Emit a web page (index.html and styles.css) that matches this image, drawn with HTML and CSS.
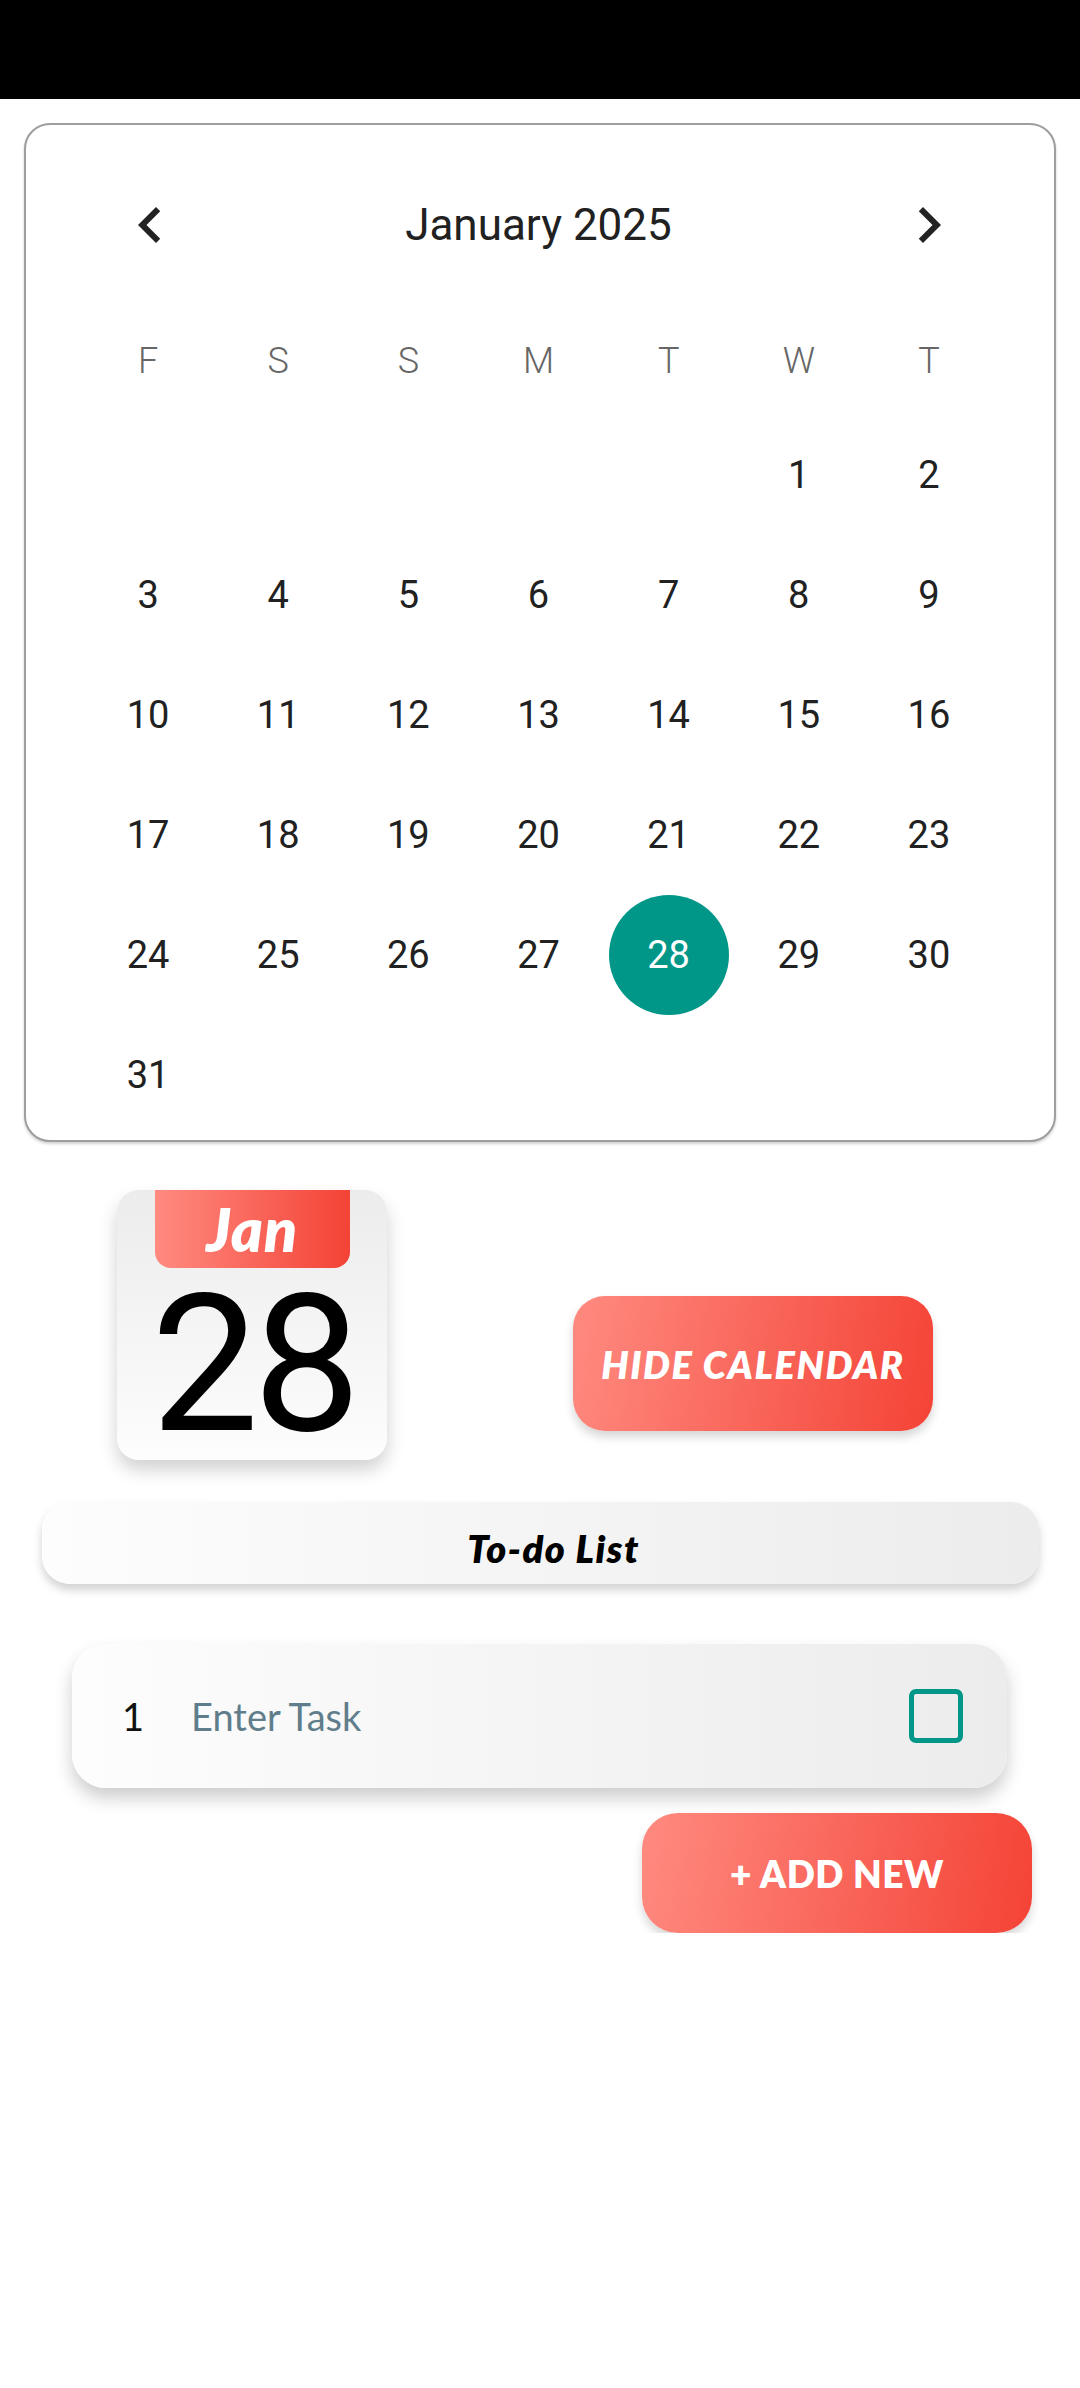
FILE: index.html
```html
<!DOCTYPE html>
<html lang="en">
<head>
<meta charset="utf-8">
<title>Calendar To-do</title>
<link rel="stylesheet" href="styles.css">
</head>
<body>
<div class="statusbar"></div>
<main class="page">
  <section class="calendar">
    <div class="cal-head">
      <span class="nav prev"><svg viewBox="0 0 24 24"><path d="M15.41 7.41L14 6l-6 6 6 6 1.41-1.41L10.83 12z"/></svg></span>
      <div class="month">January 2025</div>
      <span class="nav next"><svg viewBox="0 0 24 24"><path d="M10 6L8.59 7.41 13.17 12l-4.58 4.59L10 18l6-6z"/></svg></span>
    </div>
    <div class="weekdays">
      <span>F</span><span>S</span><span>S</span><span>M</span><span>T</span><span>W</span><span>T</span>
    </div>
    <div class="days">
      <span></span><span></span><span></span><span></span><span></span><span>1</span><span>2</span>
      <span>3</span><span>4</span><span>5</span><span>6</span><span>7</span><span>8</span><span>9</span>
      <span>10</span><span>11</span><span>12</span><span>13</span><span>14</span><span>15</span><span>16</span>
      <span>17</span><span>18</span><span>19</span><span>20</span><span>21</span><span>22</span><span>23</span>
      <span>24</span><span>25</span><span>26</span><span>27</span><span class="selected"><b>28</b></span><span>29</span><span>30</span>
      <span>31</span>
    </div>
  </section>

  <section class="today-row">
    <div class="date-card">
      <div class="date-month">Jan</div>
      <div class="date-num">28</div>
    </div>
    <div class="btn hide-btn">HIDE CALENDAR</div>
  </section>

  <div class="todo-title">To-do List</div>

  <div class="task">
    <span class="task-num">1</span>
    <span class="task-text">Enter Task</span>
    <span class="checkbox"></span>
  </div>

  <div class="btn add-btn">+ ADD NEW</div>
</main>
</body>
</html>
```

FILE: styles.css
```css
* { box-sizing: border-box; }

html, body {
  margin: 0;
  padding: 0;
  background: #ffffff;
  font-family: Roboto, "Noto Sans", sans-serif;
}

.statusbar {
  height: 99px;
  background: #000;
}

.page {
  display: flex;
  flex-direction: column;
}

/* ---------- calendar card ---------- */
.calendar {
  margin: 24px 24px 0 24px;
  border: 2px solid #9e9e9e;
  border-radius: 26px;
  padding: 50px 60px 5px 57px;
  box-shadow: 0 2px 3px rgba(0, 0, 0, 0.18);
  background: #fff;
}

.cal-head {
  display: grid;
  grid-template-columns: repeat(7, 1fr);
  height: 100px;
  align-items: center;
}

.nav {
  display: flex;
  justify-content: center;
  align-items: center;
}

.nav svg {
  width: 72px;
  height: 72px;
  fill: #222;
}

.prev svg { margin-left: 4px; }

.month {
  grid-column: 2 / 7;
  text-align: center;
  font-size: 44px;
  font-weight: 400;
  color: #212121;
}

.weekdays {
  display: grid;
  grid-template-columns: repeat(7, 1fr);
  height: 108px;
  margin-top: 32px;
  align-items: center;
  text-align: center;
  font-size: 36px;
  font-weight: 300;
  color: #666;
}

.days {
  display: grid;
  grid-template-columns: repeat(7, 1fr);
  grid-auto-rows: 120px;
  font-size: 38px;
  color: #212121;
}

.days span {
  display: flex;
  align-items: center;
  justify-content: center;
}

.days .selected b {
  display: flex;
  align-items: center;
  justify-content: center;
  width: 120px;
  height: 120px;
  border-radius: 50%;
  background: #009688;
  color: #fff;
  font-weight: 400;
}

/* ---------- today row ---------- */
.today-row {
  display: flex;
  align-items: flex-start;
  margin-top: 48px;
  padding-left: 117px;
}

.date-card {
  width: 270px;
  height: 270px;
  border-radius: 22px;
  background: linear-gradient(180deg, #ececec 0%, #fdfdfd 100%);
  box-shadow: 0 10px 18px rgba(0, 0, 0, 0.18);
  display: flex;
  flex-direction: column;
  align-items: center;
}

.date-month {
  width: 195px;
  height: 78px;
  border-radius: 0 0 16px 16px;
  background: linear-gradient(90deg, #ff8a80 0%, #f44336 100%);
  color: #fff;
  font-family: Lato, "Open Sans", sans-serif;
  font-style: italic;
  font-weight: 800;
  font-size: 60px;
  letter-spacing: 1px;
  line-height: 78px;
  text-align: center;
}

.date-num {
  font-family: Roboto, sans-serif;
  font-size: 192px;
  line-height: 1;
  color: #000;
  margin-top: 1px;
  letter-spacing: -6px;
  padding-left: 2px;
}

.btn {
  display: flex;
  align-items: center;
  justify-content: center;
  color: #fff;
  font-family: Lato, "Open Sans", sans-serif;
  font-weight: 800;
  background: linear-gradient(100deg, #ff8a80 0%, #f44336 100%);
  box-shadow: 0 6px 10px rgba(0, 0, 0, 0.16);
}

.hide-btn {
  margin-left: 186px;
  margin-top: 106px;
  width: 360px;
  height: 135px;
  border-radius: 32px;
  font-style: italic;
  font-size: 38px;
  letter-spacing: 1.5px;
}

/* ---------- to-do ---------- */
.todo-title {
  margin: 42px 41px 0 42px;
  height: 82px;
  border-radius: 28px;
  background: linear-gradient(90deg, #fdfdfd 0%, #ececec 100%);
  box-shadow: 0 6px 10px rgba(0, 0, 0, 0.18);
  display: flex;
  align-items: center;
  justify-content: center;
  padding: 10px 0 0 26px;
  font-family: Lato, "Open Sans", sans-serif;
  font-style: italic;
  font-weight: 800;
  font-size: 38px;
  letter-spacing: 1.5px;
  color: #000;
}

.task {
  margin: 60px 73px 0 72px;
  height: 144px;
  border-radius: 34px;
  background: linear-gradient(90deg, #fdfdfd 0%, #ececec 100%);
  box-shadow: 0 10px 18px rgba(0, 0, 0, 0.2);
  display: flex;
  align-items: center;
  padding: 0 44px 0 50px;
  font-family: Lato, "Open Sans", sans-serif;
  font-size: 38px;
}

.task-num {
  width: 69px;
  color: #111;
}

.task-text {
  flex: 1;
  color: #607d8b;
}

.checkbox {
  width: 54px;
  height: 54px;
  border: 5px solid #009688;
  border-radius: 7px;
}

.add-btn {
  align-self: flex-end;
  margin: 25px 48px 0 0;
  width: 390px;
  height: 120px;
  border-radius: 36px;
  font-size: 37px;
  letter-spacing: 0.5px;
}
```
